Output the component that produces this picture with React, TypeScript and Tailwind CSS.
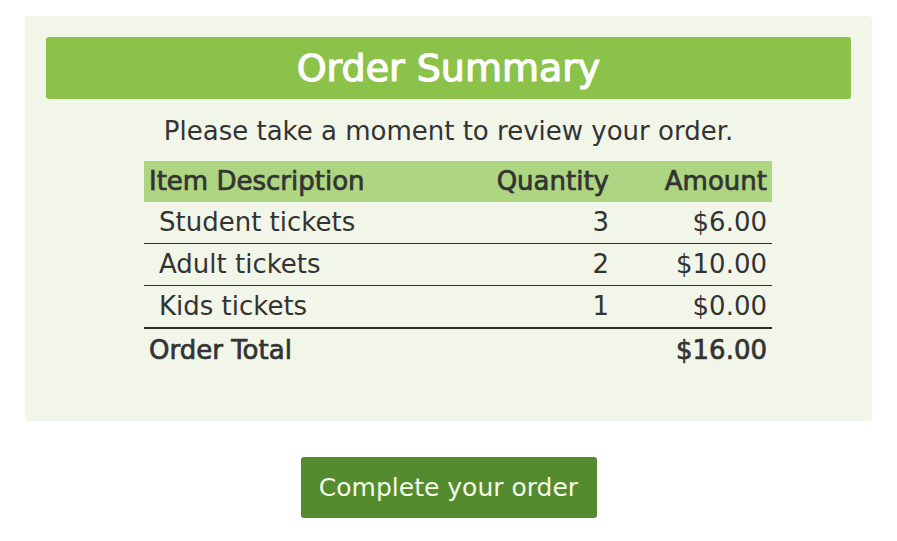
const rows = [
  { name: "Student tickets", qty: 3, amount: "$6.00" },
  { name: "Adult tickets", qty: 2, amount: "$10.00" },
  { name: "Kids tickets", qty: 1, amount: "$0.00" },
]

const bold = "[-webkit-text-stroke:0.7px_#333]"

export default function App() {
  return (
    <div className="min-h-[541px] bg-white pt-4 text-[#333] font-['DejaVu_Sans',sans-serif]">
      <div className="mx-[25px] rounded bg-[#f1f6e9] px-[21px] pt-[21px] pb-[50px]">
        <h1 className="flex h-[62px] items-center justify-center rounded-[3px] bg-[#8bc34a] text-[38px] text-white [-webkit-text-stroke:1.2px_#fff]">
          Order Summary
        </h1>
        <p className="mt-[14px] text-center text-[26px] leading-[36px]">
          Please take a moment to review your order.
        </p>
        <div className="mt-[12px] ml-[98px] w-[628px] text-[26px]">
          <div className="grid h-[41px] grid-cols-[1fr_150px_158px] items-center bg-[#aed581] px-[5px]">
            <span className={bold}>Item Description</span>
            <span className={"text-right " + bold}>Quantity</span>
            <span className={"text-right " + bold}>Amount</span>
          </div>
          {rows.map((row, i) => (
            <div
              key={row.name}
              className={
                "grid grid-cols-[1fr_150px_158px] items-center px-[5px] " +
                (i === rows.length - 1 ? "h-[43px] border-b-2 border-[#2f2f2f]" : "h-[42px] border-b border-[#2f2f2f]")
              }
            >
              <span className="pl-[10px]">{row.name}</span>
              <span className="text-right">{row.qty}</span>
              <span className="text-right">{row.amount}</span>
            </div>
          ))}
          <div className="grid h-[42px] grid-cols-[1fr_150px_158px] items-center px-[5px]">
            <span className={bold}>Order Total</span>
            <span />
            <span className={"text-right " + bold}>$16.00</span>
          </div>
        </div>
      </div>
      <div className="mt-[36px] flex justify-center">
        <button className="h-[61px] w-[296px] rounded-[3px] bg-[#558b2f] text-[25px] text-[#f4fbe9]">
          Complete your order
        </button>
      </div>
    </div>
  )
}
